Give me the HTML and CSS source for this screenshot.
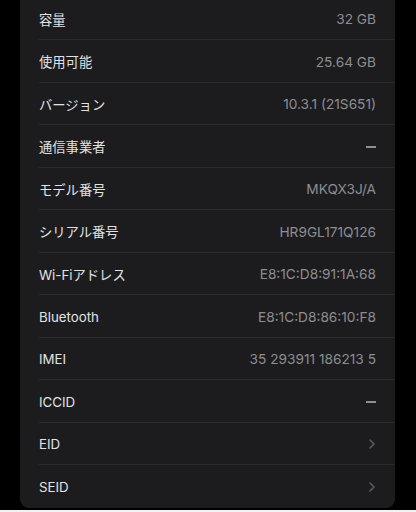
FILE: index.html
```html
<!DOCTYPE html>
<html lang="ja">
<head>
<meta charset="utf-8">
<link rel="stylesheet" href="styles.css">
</head>
<body>
<div class="screen">
  <div class="card">
    <div class="row"><span class="label">容量</span><span class="value">32 GB</span></div>
    <div class="row"><span class="label">使用可能</span><span class="value">25.64 GB</span></div>
    <div class="row"><span class="label">バージョン</span><span class="value">10.3.1 (21S651)</span></div>
    <div class="row"><span class="label">通信事業者</span><span class="value dash"></span></div>
    <div class="row"><span class="label">モデル番号</span><span class="value">MKQX3J/A</span></div>
    <div class="row"><span class="label">シリアル番号</span><span class="value">HR9GL171Q126</span></div>
    <div class="row"><span class="label">Wi-Fiアドレス</span><span class="value">E8:1C:D8:91:1A:68</span></div>
    <div class="row"><span class="label">Bluetooth</span><span class="value">E8:1C:D8:86:10:F8</span></div>
    <div class="row"><span class="label">IMEI</span><span class="value">35 293911 186213 5</span></div>
    <div class="row"><span class="label">ICCID</span><span class="value dash"></span></div>
    <div class="row"><span class="label">EID</span><svg class="chev" width="6" height="10" viewBox="0 0 6 10"><path d="M1 1 L5 5 L1 9" fill="none" stroke="#5b5b60" stroke-width="1.6" stroke-linecap="round" stroke-linejoin="round"/></svg></div>
    <div class="row"><span class="label">SEID</span><svg class="chev" width="6" height="10" viewBox="0 0 6 10"><path d="M1 1 L5 5 L1 9" fill="none" stroke="#5b5b60" stroke-width="1.6" stroke-linecap="round" stroke-linejoin="round"/></svg></div>
  </div>
</div>
</body>
</html>
```
FILE: styles.css
```css
html, body {
  margin: 0;
  padding: 0;
  background: #f2f2f2;
}
.screen {
  width: 416px;
  height: 510px;
  background: #000;
  overflow: hidden;
  font-family: Inter, "Noto Sans CJK JP", sans-serif;
}
.card {
  margin: -2.5px 0 0 20px;
  width: 375px;
  background: #1c1c1e;
  border-radius: 0 0 9px 9px;
}
.row {
  height: 42.5px;
  margin-left: 19px;
  padding: 2px 19px 0 0;
  display: flex;
  align-items: center;
  justify-content: space-between;
  box-sizing: border-box;
  border-bottom: 1px solid #2a2a2d;
}
.row:last-child {
  border-bottom: none;
}
.label {
  font-size: 13.3px;
  color: #e2e2e4;
}
.value {
  font-size: 13.7px;
  color: #8d8d92;
}
.dash {
  width: 10px;
  height: 1.5px;
  background: #8d8d92;
}
.chev {
  margin-right: 1px;
}
```
